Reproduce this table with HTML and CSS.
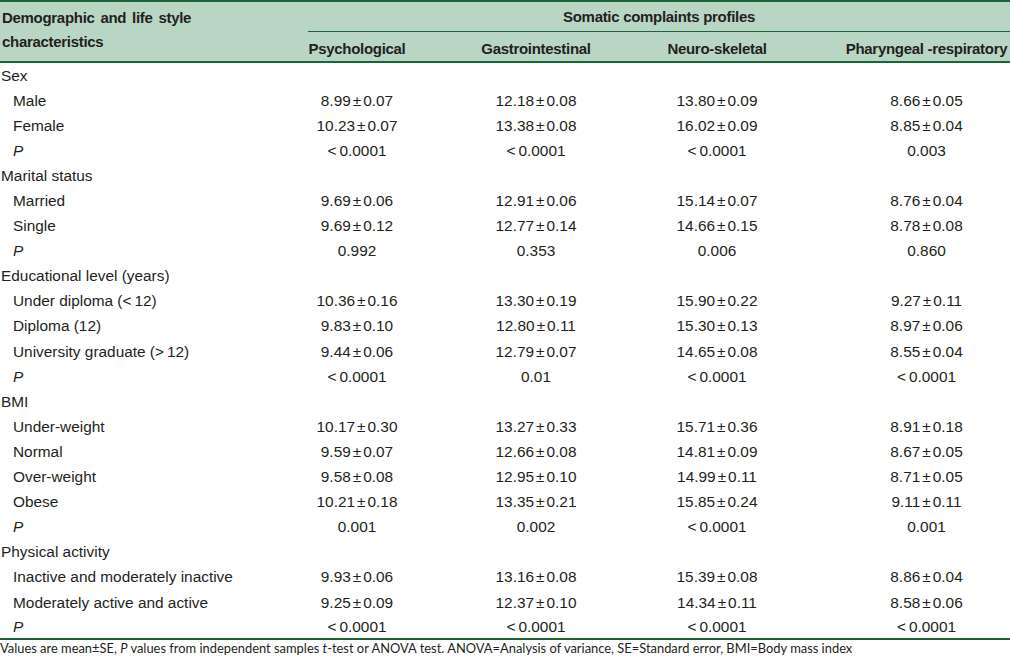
FILE: index.html
```html
<!DOCTYPE html>
<html>
<head>
<meta charset="utf-8">
<link rel="stylesheet" href="styles.css">
</head>
<body>
<table class="data">
  <colgroup>
    <col class="c-label">
    <col class="c-1">
    <col class="c-2">
    <col class="c-3">
    <col class="c-4">
  </colgroup>
  <thead>
    <tr class="h1">
      <th rowspan="2" class="h-label">Demographic and life style<br>characteristics</th>
      <th colspan="4" class="h-group">Somatic complaints profiles</th>
    </tr>
    <tr class="h2">
      <th class="h-col pad">Psychological</th>
      <th class="h-col pad">Gastrointestinal</th>
      <th class="h-col pad">Neuro-skeletal</th>
      <th class="h-col">Pharyngeal -respiratory</th>
    </tr>
  </thead>
  <tbody>
    <tr><td class="grp">Sex</td><td></td><td></td><td></td><td></td></tr>
    <tr><td class="item">Male</td><td class="v pad">8.99<span class="pm">±</span>0.07</td><td class="v pad">12.18<span class="pm">±</span>0.08</td><td class="v pad">13.80<span class="pm">±</span>0.09</td><td class="v">8.66<span class="pm">±</span>0.05</td></tr>
    <tr><td class="item">Female</td><td class="v pad">10.23<span class="pm">±</span>0.07</td><td class="v pad">13.38<span class="pm">±</span>0.08</td><td class="v pad">16.02<span class="pm">±</span>0.09</td><td class="v">8.85<span class="pm">±</span>0.04</td></tr>
    <tr><td class="item"><i>P</i></td><td class="v pad"><span class="op">&lt;</span>0.0001</td><td class="v pad"><span class="op">&lt;</span>0.0001</td><td class="v pad"><span class="op">&lt;</span>0.0001</td><td class="v">0.003</td></tr>

    <tr><td class="grp">Marital status</td><td></td><td></td><td></td><td></td></tr>
    <tr><td class="item">Married</td><td class="v pad">9.69<span class="pm">±</span>0.06</td><td class="v pad">12.91<span class="pm">±</span>0.06</td><td class="v pad">15.14<span class="pm">±</span>0.07</td><td class="v">8.76<span class="pm">±</span>0.04</td></tr>
    <tr><td class="item">Single</td><td class="v pad">9.69<span class="pm">±</span>0.12</td><td class="v pad">12.77<span class="pm">±</span>0.14</td><td class="v pad">14.66<span class="pm">±</span>0.15</td><td class="v">8.78<span class="pm">±</span>0.08</td></tr>
    <tr><td class="item"><i>P</i></td><td class="v pad">0.992</td><td class="v pad">0.353</td><td class="v pad">0.006</td><td class="v">0.860</td></tr>

    <tr><td class="grp">Educational level (years)</td><td></td><td></td><td></td><td></td></tr>
    <tr><td class="item">Under diploma (<span class="op">&lt;</span>12)</td><td class="v pad">10.36<span class="pm">±</span>0.16</td><td class="v pad">13.30<span class="pm">±</span>0.19</td><td class="v pad">15.90<span class="pm">±</span>0.22</td><td class="v">9.27<span class="pm">±</span>0.11</td></tr>
    <tr><td class="item">Diploma (12)</td><td class="v pad">9.83<span class="pm">±</span>0.10</td><td class="v pad">12.80<span class="pm">±</span>0.11</td><td class="v pad">15.30<span class="pm">±</span>0.13</td><td class="v">8.97<span class="pm">±</span>0.06</td></tr>
    <tr><td class="item">University graduate (<span class="op">&gt;</span>12)</td><td class="v pad">9.44<span class="pm">±</span>0.06</td><td class="v pad">12.79<span class="pm">±</span>0.07</td><td class="v pad">14.65<span class="pm">±</span>0.08</td><td class="v">8.55<span class="pm">±</span>0.04</td></tr>
    <tr><td class="item"><i>P</i></td><td class="v pad"><span class="op">&lt;</span>0.0001</td><td class="v pad">0.01</td><td class="v pad"><span class="op">&lt;</span>0.0001</td><td class="v"><span class="op">&lt;</span>0.0001</td></tr>

    <tr><td class="grp">BMI</td><td></td><td></td><td></td><td></td></tr>
    <tr><td class="item">Under-weight</td><td class="v pad">10.17<span class="pm">±</span>0.30</td><td class="v pad">13.27<span class="pm">±</span>0.33</td><td class="v pad">15.71<span class="pm">±</span>0.36</td><td class="v">8.91<span class="pm">±</span>0.18</td></tr>
    <tr><td class="item">Normal</td><td class="v pad">9.59<span class="pm">±</span>0.07</td><td class="v pad">12.66<span class="pm">±</span>0.08</td><td class="v pad">14.81<span class="pm">±</span>0.09</td><td class="v">8.67<span class="pm">±</span>0.05</td></tr>
    <tr><td class="item">Over-weight</td><td class="v pad">9.58<span class="pm">±</span>0.08</td><td class="v pad">12.95<span class="pm">±</span>0.10</td><td class="v pad">14.99<span class="pm">±</span>0.11</td><td class="v">8.71<span class="pm">±</span>0.05</td></tr>
    <tr><td class="item">Obese</td><td class="v pad">10.21<span class="pm">±</span>0.18</td><td class="v pad">13.35<span class="pm">±</span>0.21</td><td class="v pad">15.85<span class="pm">±</span>0.24</td><td class="v">9.11<span class="pm">±</span>0.11</td></tr>
    <tr><td class="item"><i>P</i></td><td class="v pad">0.001</td><td class="v pad">0.002</td><td class="v pad"><span class="op">&lt;</span>0.0001</td><td class="v">0.001</td></tr>

    <tr><td class="grp">Physical activity</td><td></td><td></td><td></td><td></td></tr>
    <tr><td class="item">Inactive and moderately inactive</td><td class="v pad">9.93<span class="pm">±</span>0.06</td><td class="v pad">13.16<span class="pm">±</span>0.08</td><td class="v pad">15.39<span class="pm">±</span>0.08</td><td class="v">8.86<span class="pm">±</span>0.04</td></tr>
    <tr><td class="item">Moderately active and active</td><td class="v pad">9.25<span class="pm">±</span>0.09</td><td class="v pad">12.37<span class="pm">±</span>0.10</td><td class="v pad">14.34<span class="pm">±</span>0.11</td><td class="v">8.58<span class="pm">±</span>0.06</td></tr>
    <tr class="last"><td class="item"><i>P</i></td><td class="v pad"><span class="op">&lt;</span>0.0001</td><td class="v pad"><span class="op">&lt;</span>0.0001</td><td class="v pad"><span class="op">&lt;</span>0.0001</td><td class="v"><span class="op">&lt;</span>0.0001</td></tr>
  </tbody>
</table>
<p class="note">Values are mean±SE, <i>P</i> values from independent samples <i>t</i>-test or ANOVA test. ANOVA=Analysis of variance, SE=Standard error, BMI=Body mass index</p>
</body>
</html>
```

FILE: styles.css
```css
html, body {
  margin: 0;
  padding: 0;
  background: #ffffff;
}

body {
  width: 1010px;
  height: 656px;
  overflow: hidden;
  color: #231f20;
  font-family: "Liberation Sans", Arial, sans-serif;
}

.data {
  width: 1010px;
  table-layout: fixed;
  border-collapse: separate;
  border-spacing: 0;
}

.c-label { width: 308px; }
.c-1 { width: 173px; }
.c-2 { width: 185px; }
.c-3 { width: 177px; }
.c-4 { width: 167px; }

thead th {
  background: #b9d6c4;
  font-weight: bold;
  font-size: 15px;
  letter-spacing: -0.3px;
  color: #231f20;
  padding: 0;
  white-space: nowrap;
  box-sizing: border-box;
}

.h1 th {
  border-top: 2px solid #1b6338;
}

.h-group {
  height: 31px;
  line-height: 17px;
  text-align: center;
  vertical-align: middle;
  border-bottom: 1px solid #1b6338;
}

.h-label {
  height: 63px;
  text-align: left;
  vertical-align: top;
  padding: 4px 0 0 2px;
  line-height: 23.5px;
  word-spacing: 2px;
  border-bottom: 2px solid #1b6338;
}

.h-col {
  height: 31px;
  line-height: 17px;
  text-align: center;
  vertical-align: bottom;
  padding-bottom: 4px;
  border-bottom: 2px solid #1b6338;
}

.h-col.pad,
.v.pad {
  padding-right: 75px;
}

tbody td {
  height: 25.1px;
  font-size: 15.4px;
  line-height: 18px;
  padding: 0;
  white-space: nowrap;
  vertical-align: middle;
  color: #231f20;
  box-sizing: border-box;
}

.grp {
  padding-left: 1px;
}

.item {
  padding-left: 13px;
}

.v {
  text-align: center;
}

.pm {
  padding: 0 2px;
}

.op {
  padding-right: 3px;
}

tbody tr.last td {
  border-bottom: 2px solid #1b6338;
}

.note {
  margin: 0;
  padding: 1px 0 0 0;
  font-family: "Lato", "Open Sans", sans-serif;
  font-size: 12.9px;
  line-height: 15px;
  color: #231f20;
  white-space: nowrap;
}
```
